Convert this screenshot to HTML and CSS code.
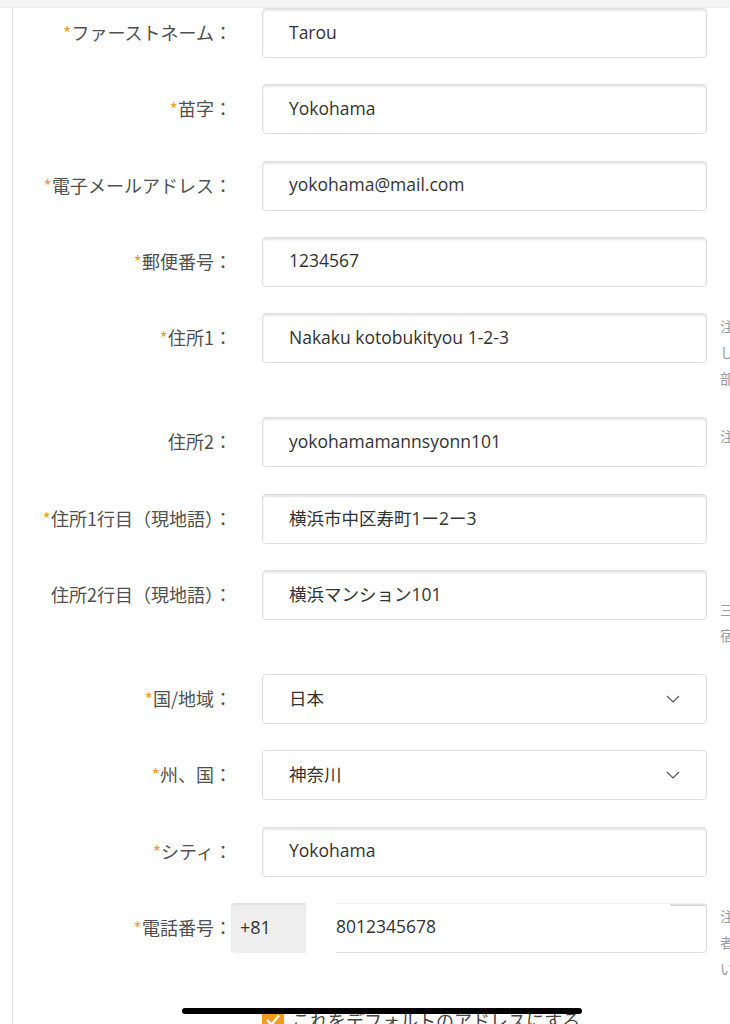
FILE: index.html
```html
<!DOCTYPE html>
<html lang="ja">
<head>
<meta charset="utf-8">
<title>住所の編集</title>
<link rel="stylesheet" href="styles.css">
</head>
<body>
<div class="topbar"></div>
<div class="panel">
  <form class="form">
    <div class="row">
      <label class="label"><span class="req">*</span>ファーストネーム：</label>
      <div class="field"><input class="input" value="Tarou"></div>
    </div>
    <div class="row">
      <label class="label"><span class="req">*</span>苗字：</label>
      <div class="field"><input class="input" value="Yokohama"></div>
    </div>
    <div class="row">
      <label class="label"><span class="req">*</span>電子メールアドレス：</label>
      <div class="field"><input class="input" value="yokohama@mail.com"></div>
    </div>
    <div class="row">
      <label class="label"><span class="req">*</span>郵便番号：</label>
      <div class="field"><input class="input" value="1234567"></div>
    </div>
    <div class="row">
      <label class="label"><span class="req">*</span>住所1：</label>
      <div class="field"><input class="input" value="Nakaku kotobukityou 1-2-3"></div>
      <div class="note">注意：住所はローマ字で入力<br>してください。番地や建物名、<br>部屋番号もご記入ください。</div>
    </div>
    <div class="row">
      <label class="label">住所2：</label>
      <div class="field"><input class="input" value="yokohamamannsyonn101"></div>
      <div class="note note-single">注意：ローマ字で入力してください。</div>
    </div>
    <div class="row">
      <label class="label"><span class="req">*</span>住所1行目（現地語）：</label>
      <div class="field"><input class="input" value="横浜市中区寿町1ー2ー3"></div>
    </div>
    <div class="row">
      <label class="label">住所2行目（現地語）：</label>
      <div class="field"><input class="input" value="横浜マンション101"></div>
      <div class="note">&nbsp;<br>三丁目などは現地語で入力し<br>宿泊施設名もご記入ください。</div>
    </div>
    <div class="row">
      <label class="label"><span class="req">*</span>国/地域：</label>
      <div class="field">
        <div class="select"><span>日本</span><svg class="chev" width="14" height="8" viewBox="0 0 14 8"><path d="M1 1 L7 7 L13 1" fill="none" stroke="#555" stroke-width="1.2"/></svg></div>
      </div>
    </div>
    <div class="row">
      <label class="label"><span class="req">*</span>州、国：</label>
      <div class="field">
        <div class="select"><span>神奈川</span><svg class="chev" width="14" height="8" viewBox="0 0 14 8"><path d="M1 1 L7 7 L13 1" fill="none" stroke="#555" stroke-width="1.2"/></svg></div>
      </div>
    </div>
    <div class="row">
      <label class="label"><span class="req">*</span>シティ：</label>
      <div class="field"><input class="input" value="Yokohama"></div>
    </div>
    <div class="row">
      <label class="label"><span class="req">*</span>電話番号：</label>
      <div class="field field-phone">
        <div class="prefix">+81</div>
        <input class="input input-phone" value="8012345678">
      </div>
      <div class="note">注意：配送の際に配達業<br>者からご連絡することがござ<br>います。</div>
    </div>
    <div class="check-row">
      <span class="checkbox"><svg width="22" height="22" viewBox="0 0 22 22"><path d="M5 11 L9.5 15.5 L17 6.5" fill="none" stroke="#fff" stroke-width="2.4"/></svg></span>
      <span class="check-text">これをデフォルトのアドレスにする</span>
    </div>
  </form>
</div>
<div class="homebar"></div>
</body>
</html>
```

FILE: styles.css
```css
* {
  box-sizing: border-box;
}

html,
body {
  margin: 0;
  padding: 0;
}

body {
  width: 730px;
  height: 1024px;
  overflow: hidden;
  background: #fff;
  font-family: "Noto Sans CJK JP", "Noto Sans", sans-serif;
  position: relative;
}

.topbar {
  height: 8px;
  background: #f5f5f5;
  border-bottom: 1px solid #ececec;
}

.panel {
  margin-left: 12px;
  border-left: 1px solid #e8e8e8;
  min-height: 1016px;
}

.form {
  display: flex;
  flex-direction: column;
  gap: 26.25px;
  margin: 0;
}

.row {
  display: flex;
  align-items: flex-start;
}

.label {
  width: 219px;
  flex: none;
  text-align: right;
  line-height: 48px;
  font-size: 18px;
  color: #505050;
  white-space: nowrap;
}

.req {
  color: #f0a030;
}

.field {
  width: 445px;
  flex: none;
  margin-left: 30px;
}

.input {
  display: block;
  width: 100%;
  height: 50px;
  margin: 0;
  border: 1px solid #dedede;
  border-radius: 4px;
  box-shadow: inset 0 2px 2px rgba(0, 0, 0, 0.1);
  padding: 0 0 3px 26px;
  font: 17.5px "Open Sans", "Noto Sans CJK JP", sans-serif;
  color: #333;
  background: #fff;
  outline: none;
}

.select {
  display: flex;
  align-items: center;
  justify-content: space-between;
  height: 50px;
  border: 1px solid #dedede;
  border-radius: 4px;
  padding: 0 26px 3px 26px;
  font: 17.5px "Open Sans", "Noto Sans CJK JP", sans-serif;
  color: #333;
  background: #fff;
}

.chev {
  display: block;
  margin-top: 2px;
}

.note {
  margin-left: 13px;
  font-size: 14px;
  line-height: 26px;
  color: #9a9a9a;
  white-space: nowrap;
}

.note-single {
  padding-top: 6px;
}

.field-phone {
  display: flex;
  width: 476px;
  margin-left: -1px;
}

.prefix {
  width: 75px;
  flex: none;
  height: 50px;
  padding-left: 9px;
  background: #eeeeee;
  border-radius: 4px 0 0 4px;
  box-shadow: inset 0 2px 2px rgba(0, 0, 0, 0.06);
  font: 18px "Open Sans", "Noto Sans CJK JP", sans-serif;
  line-height: 48px;
  color: #333;
}

.input-phone {
  flex: 1;
  width: auto;
  margin-left: 30px;
  padding-left: 0;
  border-left: none;
  border-top-color: #f0f0f0;
  border-radius: 0 4px 4px 0;
  box-shadow: none;
  background: linear-gradient(#dddddd, #dddddd) no-repeat right top / 36px 2px, #fff;
}

.check-row {
  display: flex;
  align-items: center;
  gap: 8px;
  margin-left: 249px;
  line-height: 26px;
}

.checkbox {
  width: 22px;
  height: 22px;
  flex: none;
  background: #f39a1f;
  border-radius: 2px;
  display: block;
}

.checkbox svg {
  display: block;
}

.check-text {
  font-size: 18px;
  color: #444;
  white-space: nowrap;
}

.homebar {
  position: absolute;
  left: 182px;
  top: 1008px;
  width: 400px;
  height: 6px;
  background: #000;
  border-radius: 3px;
}
```
